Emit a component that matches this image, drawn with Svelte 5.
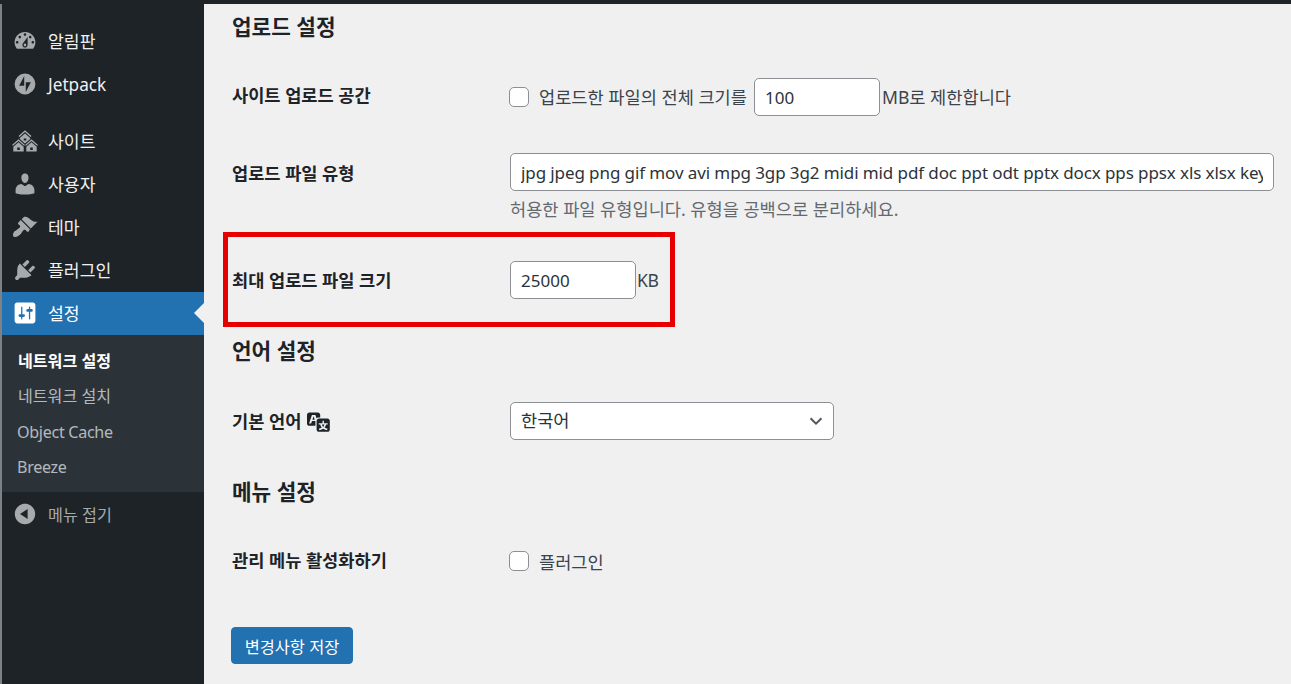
<script>
  const icons = {
    dashboard: "M3.76 16h12.48c1.1-1.37 1.76-3.11 1.76-5 0-4.42-3.58-8-8-8s-8 3.58-8 8c0 1.89.66 3.63 1.76 5zM10 4c.55 0 1 .45 1 1s-.45 1-1 1-1-.45-1-1 .45-1 1-1zM6 6c.55 0 1 .45 1 1s-.45 1-1 1-1-.45-1-1 .45-1 1-1zm8 0c.55 0 1 .45 1 1s-.45 1-1 1-1-.45-1-1 .45-1 1-1zm-5.37 5.55L12 7v6c0 1.1-.9 2-2 2s-2-.9-2-2c0-.57.24-1.08.63-1.45zM4 10c.55 0 1 .45 1 1s-.45 1-1 1-1-.45-1-1 .45-1 1-1zm12 0c.55 0 1 .45 1 1s-.45 1-1 1-1-.45-1-1 .45-1 1-1zm-5 3c0-.55-.45-1-1-1s-1 .45-1 1 .45 1 1 1 1-.45 1-1z",
    jetpack: "M10 2a8 8 0 1 0 0 16 8 8 0 0 0 0-16zm-.6 9.3H5.5l3.9-7.4v7.4zm1.2 4.8V8.7h3.9l-3.9 7.4z",
    sites: "M14.27 6.87L10 3.14 5.73 6.87 5 6.14l5-4.38 5 4.38zM14 8.42l-4.05 3.43L6 8.38v-.74l4-3.5 4 3.5v.78zM11 9.7V8H9v1.7h2zm-1.73 4.03L5 10 .73 13.73 0 13l5-4.38L10 13zm10 0L15 10l-4.27 3.73L10 13l5-4.38L20 13zM5 11l4 3.5V18H1v-3.5zm10 0l4 3.5V18h-8v-3.5zM6 17v-2H4v2h2zm10 0v-2h-2v2h2z",
    users: "M10 9.25c-2.27 0-2.73-3.44-2.73-3.44C7 4.02 7.82 2 9.97 2c2.16 0 2.98 2.02 2.71 3.81 0 0-.41 3.44-2.68 3.44zm0 2.57L12.72 10c2.39 0 4.52 2.33 4.52 4.53v2.49s-3.65 1.13-7.24 1.13c-3.65 0-7.24-1.13-7.24-1.13v-2.49c0-2.25 1.94-4.48 4.47-4.48z",
    theme: "M14.48 11.06L7.41 3.99l1.5-1.5c.5-.56 2.3-.47 3.51.32 1.21.8 1.43 1.28 2.91 2.1 1.18.64 2.45 1.26 4.45.85zm-.71.71L6.7 4.7 4.93 6.47c-.39.39-.39 1.02 0 1.41l1.06 1.06c.39.39.39 1.03 0 1.42-.6.6-1.43 1.11-2.21 1.69-.35.26-.7.53-1.01.84C1.43 13.23 0 16.13 1.2 17.33c1.2 1.2 3.92-.4 5.26-1.74.31-.31.58-.66.84-1.01.58-.78 1.09-1.61 1.69-2.21.39-.39 1.03-.39 1.42 0l1.06 1.06c.39.39 1.02.39 1.41 0z",
    plugins: "M13.11 4.36L9.87 7.6 8 5.73l3.24-3.24c.35-.34 1.05-.2 1.56.32.52.51.66 1.21.31 1.55zm-8 1.77l.91-1.12 9.01 9.01-1.19.84c-.71.71-2.63 1.16-3.82 1.16H6.14L4.9 17.26c-.59.59-1.54.59-2.12 0-.59-.58-.59-1.53 0-2.12l1.24-1.24v-3.88c0-1.13.4-3.19 1.09-3.89zm7.26 3.97l3.24-3.24c.34-.35 1.04-.21 1.55.31.52.51.66 1.21.31 1.55l-3.24 3.25z",
    settings: "M18 16V4c0-1.1-.9-2-2-2H4c-1.1 0-2 .9-2 2v12c0 1.1.9 2 2 2h12c1.1 0 2-.9 2-2zM8 11h1c.55 0 1 .45 1 1s-.45 1-1 1H8v1.5c0 .28-.22.5-.5.5s-.5-.22-.5-.5V13H6c-.55 0-1-.45-1-1s.45-1 1-1h1V5.5c0-.28.22-.5.5-.5s.5.22.5.5V11zm5-2h-1c-.55 0-1-.45-1-1s.45-1 1-1h1V5.5c0-.28.22-.5.5-.5s.5.22.5.5V7h1c.55 0 1 .45 1 1s-.45 1-1 1h-1v5.5c0 .28-.22.5-.5.5s-.5-.22-.5-.5V9z",
    collapse: "M10 2.16c4.33 0 7.84 3.51 7.84 7.84s-3.51 7.84-7.84 7.84S2.16 14.33 2.16 10 5.71 2.16 10 2.16zm2 11.72V6.12L6.18 9.97z",
    translation: "M11 7H9.49c-.63 0-1.25.3-1.59.7L7 5H4.13l-2.39 7h1.69l.74-2H7v4H2c-1.1 0-2-.9-2-2V5c0-1.1.9-2 2-2h7c1.1 0 2 .9 2 2v2zM6.51 9H4.49l1-2.93zM10 8h7c1.1 0 2 .9 2 2v7c0 1.1-.9 2-2 2h-7c-1.1 0-2-.9-2-2v-7c0-1.1.9-2 2-2zm7.25 5v-1.08h-3.17V9.75h-1.16v2.17H9.75V13h1.28c.11.85.56 1.85 1.28 2.62-.87.36-1.89.62-2.31.62-.01.02.22.97.2 1.46.84 0 2.21-.5 3.28-1.15 1.09.65 2.48 1.15 3.34 1.15-.02-.49.2-1.44.2-1.46-.43 0-1.49-.27-2.38-.63.7-.77 1.14-1.77 1.25-2.61h1.06zm-3.81 1.93c-.5-.46-.85-1.13-1.01-1.93h2.09c-.17.8-.51 1.47-1 1.93l-.04.03s-.03-.02-.04-.03z"
  };
  const groupA = [
    { label: "알림판", icon: "dashboard" },
    { label: "Jetpack", icon: "jetpack" }
  ];
  const groupB = [
    { label: "사이트", icon: "sites" },
    { label: "사용자", icon: "users" },
    { label: "테마", icon: "theme" },
    { label: "플러그인", icon: "plugins" }
  ];
  const fileTypes = "jpg jpeg png gif mov avi mpg 3gp 3g2 midi mid pdf doc ppt odt pptx docx pps ppsx xls xlsx key";
</script>

<div class="page">
  <div class="topbar"></div>
  <div class="shell">
    <nav class="sidebar">
      <ul class="menu group-a">
        {#each groupA as item}
          <li class="item">
            <svg class="icon" viewBox="0 0 20 20"><path d={icons[item.icon]} /></svg>
            <span>{item.label}</span>
          </li>
        {/each}
      </ul>
      <ul class="menu group-b">
        {#each groupB as item}
          <li class="item">
            <svg class="icon" viewBox="0 0 20 20"><path d={icons[item.icon]} /></svg>
            <span>{item.label}</span>
          </li>
        {/each}
        <li class="item active">
          <svg class="icon" viewBox="0 0 20 20"><path d={icons.settings} /></svg>
          <span>설정</span>
        </li>
      </ul>
      <ul class="submenu">
        <li class="ko current">네트워크 설정</li>
        <li class="ko">네트워크 설치</li>
        <li class="latin">Object Cache</li>
        <li class="latin">Breeze</li>
      </ul>
      <div class="item collapse">
        <svg class="icon" viewBox="0 0 20 20"><path d={icons.collapse} /></svg>
        <span>메뉴 접기</span>
      </div>
    </nav>

    <main class="content">
      <h2 class="h-upload">업로드 설정</h2>

      <div class="row row-site">
        <div class="label">사이트 업로드 공간</div>
        <div class="field inline">
          <input type="checkbox" class="check" id="quota" />
          <label class="check-label" for="quota">업로드한 파일의 전체 크기를</label>
          <input type="text" class="num" value="100" />
          <span class="unit">MB로 제한합니다</span>
        </div>
      </div>

      <div class="row row-types">
        <div class="label">업로드 파일 유형</div>
        <div class="field">
          <input type="text" class="wide" value={fileTypes} />
          <p class="desc">허용한 파일 유형입니다. 유형을 공백으로 분리하세요.</p>
        </div>
      </div>

      <div class="row row-max">
        <div class="label">최대 업로드 파일 크기</div>
        <div class="field inline">
          <input type="text" class="num" value="25000" />
          <span class="unit kb">KB</span>
        </div>
      </div>

      <h2 class="h-lang">언어 설정</h2>

      <div class="row row-lang">
        <div class="label lang-label">
          기본 언어
          <svg class="translate" viewBox="0 0 20 20"><path d={icons.translation} /></svg>
        </div>
        <div class="field">
          <div class="select-wrap">
            <select class="select">
              <option>한국어</option>
            </select>
            <svg class="chevron" viewBox="0 0 16 16"><path d="M2.5 5.2 8 10.7l5.5-5.5" /></svg>
          </div>
        </div>
      </div>

      <h2 class="h-menu">메뉴 설정</h2>

      <div class="row row-menu">
        <div class="label">관리 메뉴 활성화하기</div>
        <div class="field inline">
          <input type="checkbox" class="check" id="plugins" />
          <label class="check-label" for="plugins">플러그인</label>
        </div>
      </div>

      <button class="save" type="button">변경사항 저장</button>
    </main>
  </div>
</div>

<style>
  :global(body) {
    margin: 0;
    background: #f0f0f1;
  }
  .page {
    width: 1291px;
    height: 684px;
    overflow: hidden;
    display: flex;
    flex-direction: column;
    font-family: "Noto Sans", "Noto Sans CJK KR", sans-serif;
    font-size: 17.6px;
    color: #3c434a;
    background: #f0f0f1;
  }
  .topbar {
    height: 4px;
    flex: none;
    background: #1d2327;
  }
  .shell {
    flex: 1;
    display: flex;
    min-height: 0;
  }
  .sidebar {
    width: 202px;
    flex: none;
    border-left: 2px solid #7f8285;
    background: #1d2327;
    padding-top: 16px;
  }
  ul {
    list-style: none;
    margin: 0;
    padding: 0;
  }
  .item {
    position: relative;
    box-sizing: border-box;
    height: 43px;
    padding: 0 0 2px 10px;
    display: flex;
    align-items: center;
    gap: 10px;
    color: #f0f0f1;
    font-size: 17.2px;
  }
  .group-a .item:last-child {
    height: 44px;
  }
  .group-b {
    margin-top: 13px;
  }
  .icon {
    width: 26px;
    height: 26px;
    flex: none;
    fill: #a7aaad;
  }
  .active {
    background: #2271b1;
    color: #fff;
  }
  .active .icon {
    fill: #fff;
  }
  .active::after {
    content: "";
    position: absolute;
    right: 0;
    top: 11px;
    border: 10px solid transparent;
    border-left: 0;
    border-right-color: #f0f0f1;
  }
  .submenu {
    background: #2c3338;
    padding: 8px 0 7px 16px;
    font-size: 16.1px;
    color: rgba(240, 246, 252, 0.7);
  }
  .submenu li {
    box-sizing: border-box;
    height: 35.5px;
    display: flex;
    align-items: center;
  }
  .submenu .ko {
    padding-bottom: 2px;
  }
  .submenu .latin {
    letter-spacing: -0.3px;
    margin-left: -1px;
  }
  .submenu .current {
    color: #fff;
    font-weight: 700;
  }
  .collapse {
    height: 44px;
    padding-bottom: 1px;
    color: #a7aaad;
    font-size: 16.2px;
  }
  .content {
    flex: 1;
    min-width: 0;
    padding: 9px 17px 0 27px;
  }
  h2 {
    margin: 0;
    padding-left: 1px;
    height: 28px;
    line-height: 28px;
    font-size: 21.3px;
    font-weight: 700;
    color: #1d2327;
  }
  .row {
    display: flex;
    position: relative;
  }
  .label {
    width: 278px;
    padding-left: 1px;
    flex: none;
    height: 38px;
    line-height: 38px;
    font-weight: 700;
    font-size: 17.6px;
    color: #1d2327;
  }
  .field {
    flex: 1;
    min-width: 0;
  }
  .inline {
    display: flex;
    align-items: center;
    height: 38px;
  }
  .row-site {
    margin-top: 37px;
  }
  .row-site .label {
    line-height: 34px;
  }
  .row-site .check-label,
  .row-site .unit {
    padding-bottom: 2px;
  }
  .row-types {
    margin-top: 37px;
  }
  .row-types .label {
    line-height: 40px;
  }
  .row-max {
    margin-top: 40px;
  }
  .row-max::after {
    content: "";
    position: absolute;
    left: -8px;
    top: -29px;
    width: 452px;
    height: 95px;
    box-sizing: border-box;
    border: 5px solid #e60000;
    pointer-events: none;
  }
  .h-lang {
    margin-top: 38px;
  }
  .row-lang {
    margin-top: 37px;
  }
  .h-menu {
    margin-top: 38px;
  }
  .row-menu {
    margin-top: 36px;
  }
  .row-menu .label {
    line-height: 36px;
  }
  input[type="text"],
  .select {
    box-sizing: border-box;
    height: 38px;
    border: 1px solid #8c8f94;
    border-radius: 5px;
    background: #fff;
    font: inherit;
    font-size: 17px;
    color: #2c3338;
    padding: 0 10px;
    margin: 0;
    outline: none;
  }
  .num {
    width: 126px;
  }
  input[type="text"].wide {
    display: block;
    width: 764px;
    letter-spacing: -0.1px;
  }
  .check {
    appearance: none;
    box-sizing: border-box;
    width: 20px;
    height: 20px;
    margin: 0 0 0 -1px;
    border: 1px solid #8c8f94;
    border-radius: 5px;
    background: #fff;
    flex: none;
  }
  .check-label {
    margin-left: 10px;
    margin-right: 7px;
  }
  .unit {
    margin-left: 2px;
  }
  .kb {
    margin-left: 1px;
    letter-spacing: -0.4px;
  }
  .desc {
    margin: 6px 0 0;
    line-height: 24px;
    height: 24px;
    font-size: 17.6px;
    color: #646970;
  }
  .lang-label {
    display: flex;
    align-items: center;
    gap: 6px;
  }
  .translate {
    width: 24px;
    height: 24px;
    flex: none;
    fill: #1d2327;
  }
  .select-wrap {
    position: relative;
    width: 324px;
    height: 38px;
  }
  .select {
    appearance: none;
    width: 100%;
    font-size: 17.6px;
    padding-bottom: 2px;
  }
  .chevron {
    position: absolute;
    right: 10px;
    top: 11px;
    width: 16px;
    height: 16px;
    fill: none;
    stroke: #50575e;
    stroke-width: 2;
  }
  .save {
    display: block;
    margin-top: 47px;
    width: 122px;
    height: 37px;
    padding: 0;
    border: 1px solid #2271b1;
    border-radius: 4px;
    background: #2271b1;
    color: #fff;
    font: inherit;
    font-size: 16.4px;
  }
</style>
